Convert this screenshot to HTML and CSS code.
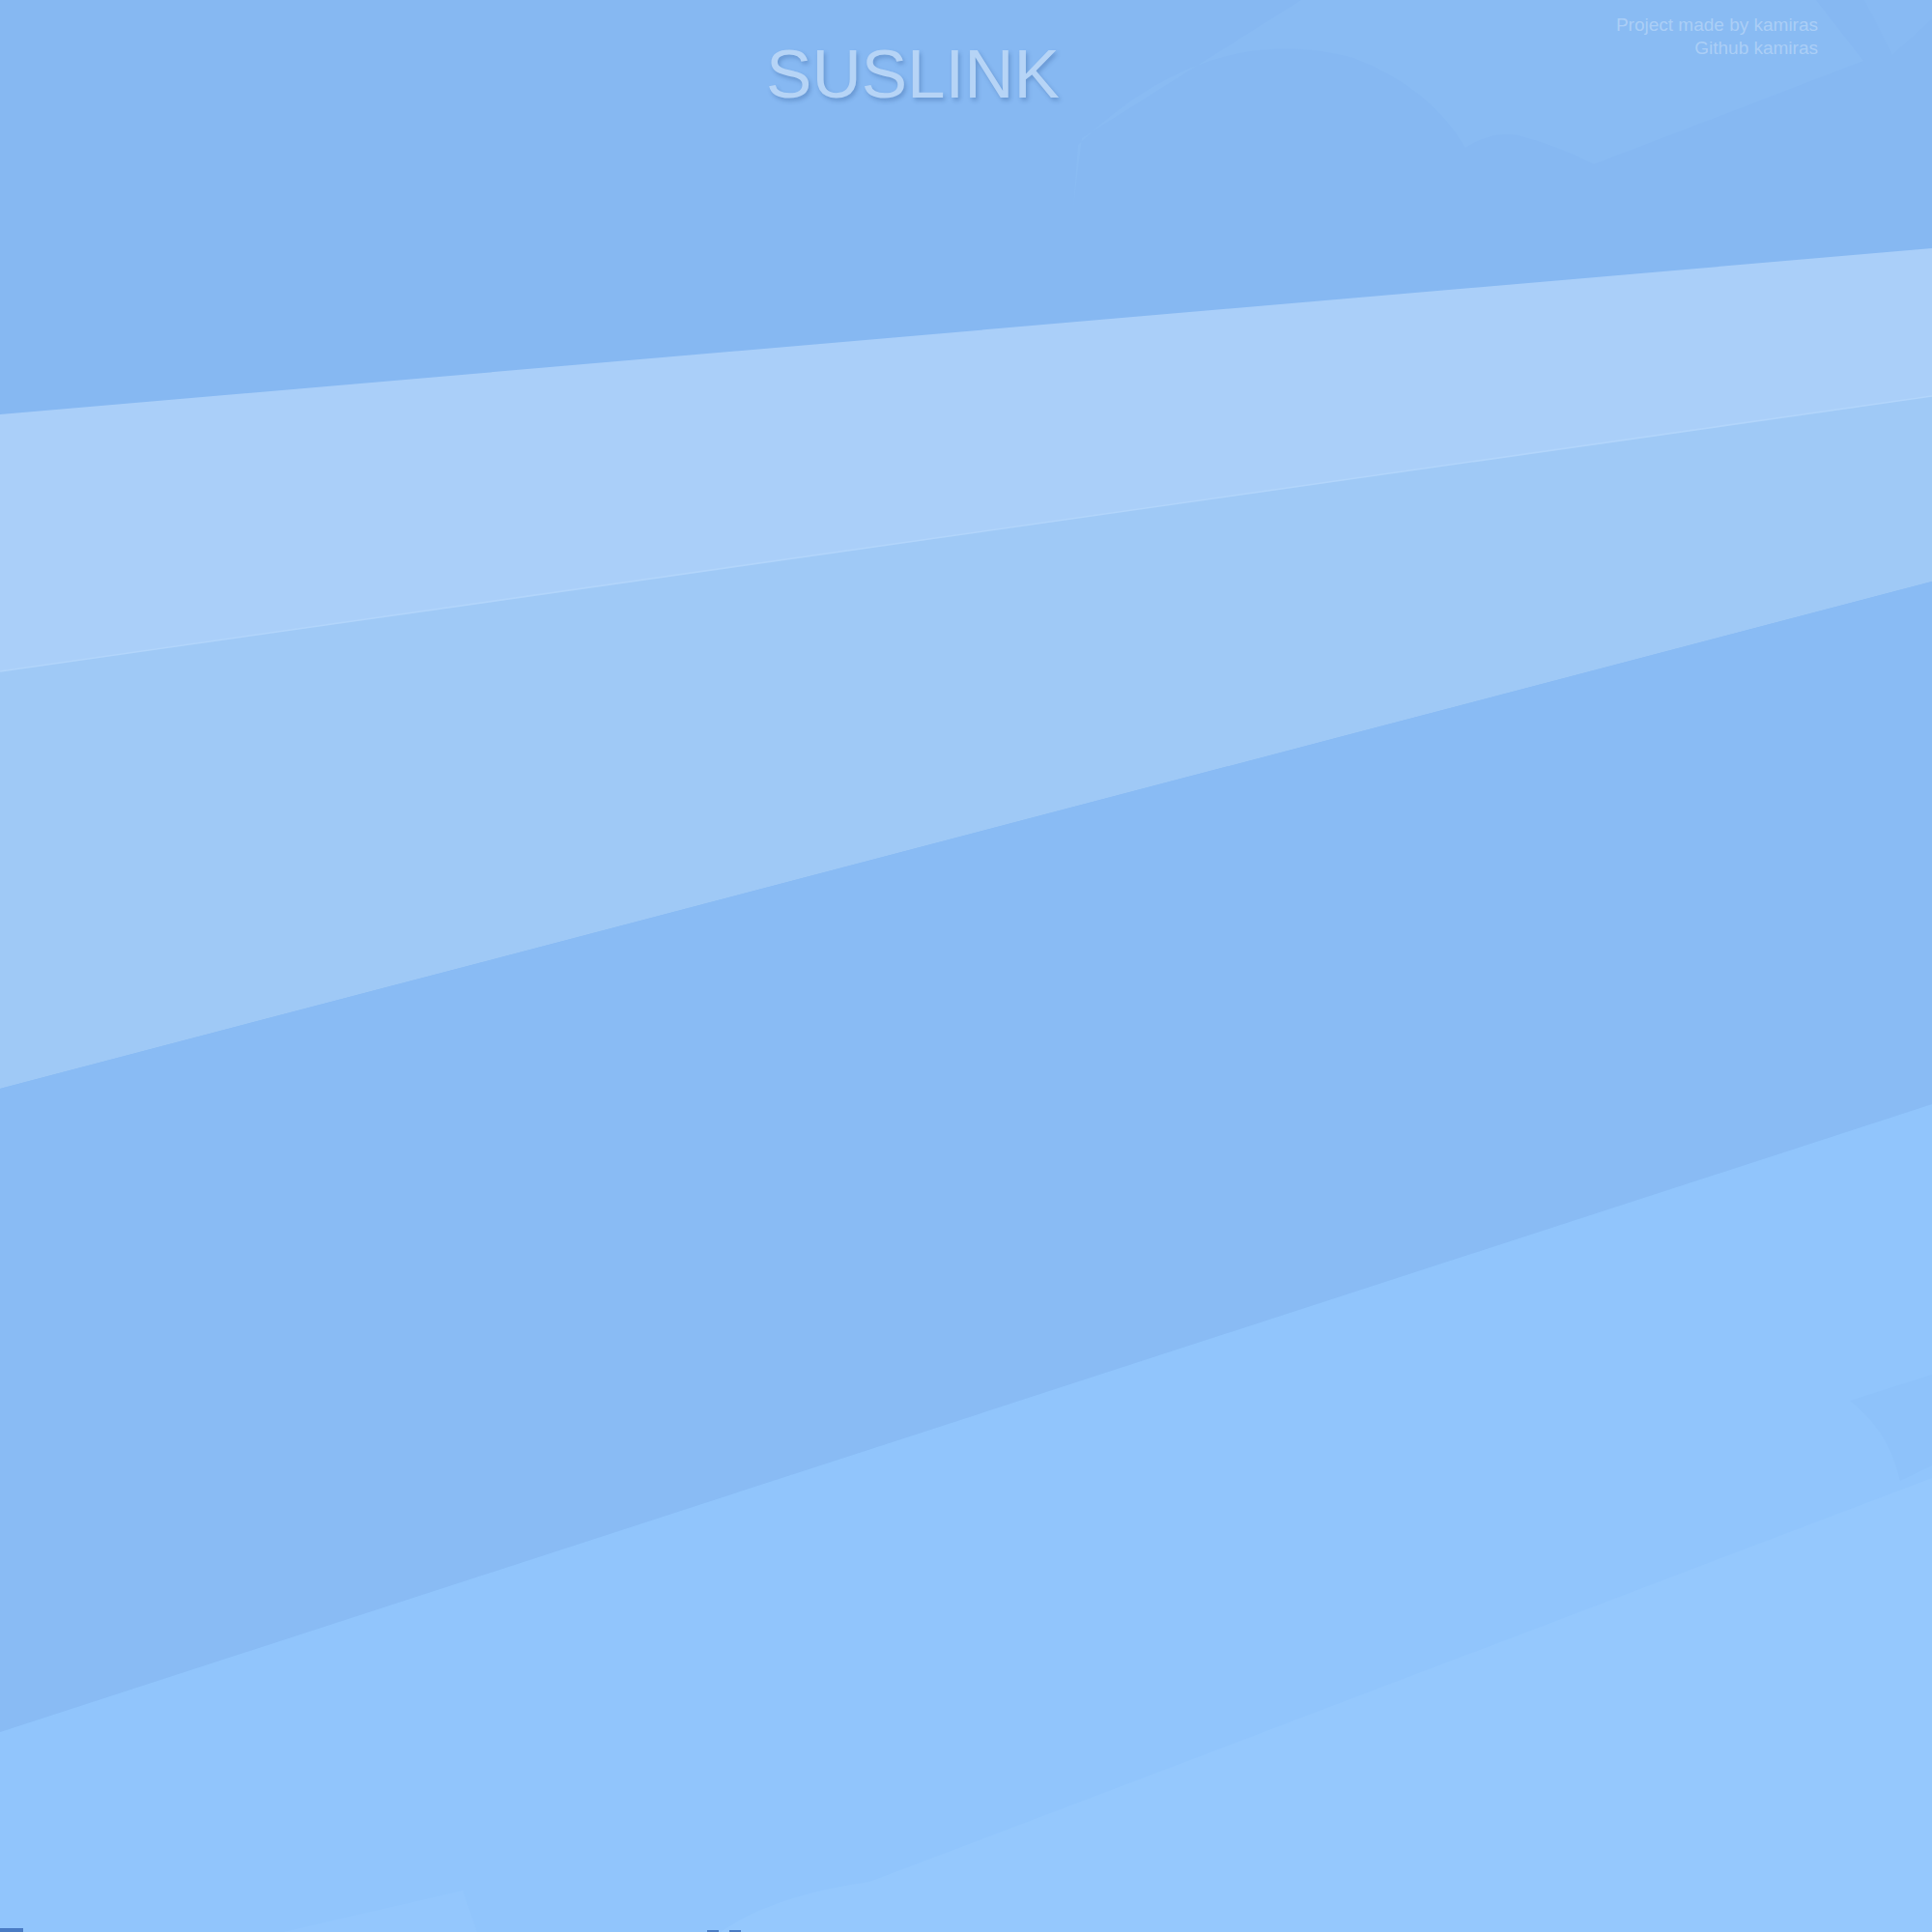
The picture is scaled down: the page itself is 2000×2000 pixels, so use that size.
FILE: index.html
```html
<!DOCTYPE html>
<html lang="en">
<head>
<meta charset="utf-8">
<title>SUSLINK</title>
<link rel="stylesheet" href="styles.css">
</head>
<body>
<div class="page">
  <svg class="backdrop" viewBox="0 0 2000 2000" width="2000" height="2000" aria-hidden="true">
    <rect x="0" y="0" width="2000" height="2000" fill="#86b8f2"/>
    <path d="M1347 0 L1120 143 L1111 215 L1116 150 Q1250 20 1401 60 Q1480 90 1517 153 Q1545 135 1571 140 Q1610 150 1650 170 L1929 63 L1880 0 Z" fill="#89bbf3"/>
    <path d="M1959 57 L2000 20 L2000 0 L1930 0 Z" fill="#88baf3"/>
    <polygon points="0,429 2000,257 2000,410 0,695" fill="#aacff9"/>
    <polygon points="0,695 2000,410 2000,602 0,1127" fill="#9fc9f6"/>
    <line x1="0" y1="695" x2="2000" y2="410" stroke="#b2d5fb" stroke-width="1.6"/>
    <polygon points="0,1127 2000,602 2000,1143 0,1793" fill="#89bbf4"/>
    <polygon points="0,1793 2000,1143 2000,2000 0,2000" fill="#91c5fc"/>
    <path d="M746 2000 Q800 1962 900 1948 L2000 1530 L2000 2000 Z" fill="#95c8fd"/>
    <path d="M293 2000 L479 1957 L494 2000 Z" fill="#94c7fd"/>
    <path d="M1915 1450 L2000 1423 L2000 1517 L1967 1533 Q1955 1480 1915 1450 Z" fill="#8ec2fa"/>
    <rect x="0" y="1996" width="24" height="4" fill="#4a7cc4"/>
    <rect x="732" y="1998" width="12" height="2" fill="#4a7cc4"/>
    <rect x="755" y="1998" width="12" height="2" fill="#4a7cc4"/>
  </svg>
  <header class="header">
    <h1 class="title">SUSLINK</h1>
    <div class="credits">
      <div class="credit-line">Project made by kamiras</div>
      <div class="credit-line">Github kamiras</div>
    </div>
  </header>
</div>
</body>
</html>
```

FILE: styles.css
```css
html, body {
  margin: 0;
  padding: 0;
}

body {
  background: #86b8f2;
  font-family: "Liberation Sans", Arial, sans-serif;
  overflow: hidden;
}

.page {
  position: relative;
  width: 2000px;
  height: 2000px;
  overflow: hidden;
}

.backdrop {
  position: absolute;
  left: 0;
  top: 0;
  display: block;
}

.header {
  position: relative;
  display: flex;
  justify-content: center;
  padding: 41px 110px 0 0;
}

.title {
  margin: 0;
  font-family: "Liberation Sans", Arial, sans-serif;
  font-weight: 400;
  font-size: 71px;
  line-height: 1;
  color: #b6d4f6;
  text-shadow: 2px 3px 4px rgba(30, 70, 130, 0.28);
}

.credits {
  position: absolute;
  top: 14px;
  right: 118px;
  text-align: right;
  font-size: 19px;
  line-height: 24px;
  color: rgba(255, 255, 255, 0.3);
}
```
